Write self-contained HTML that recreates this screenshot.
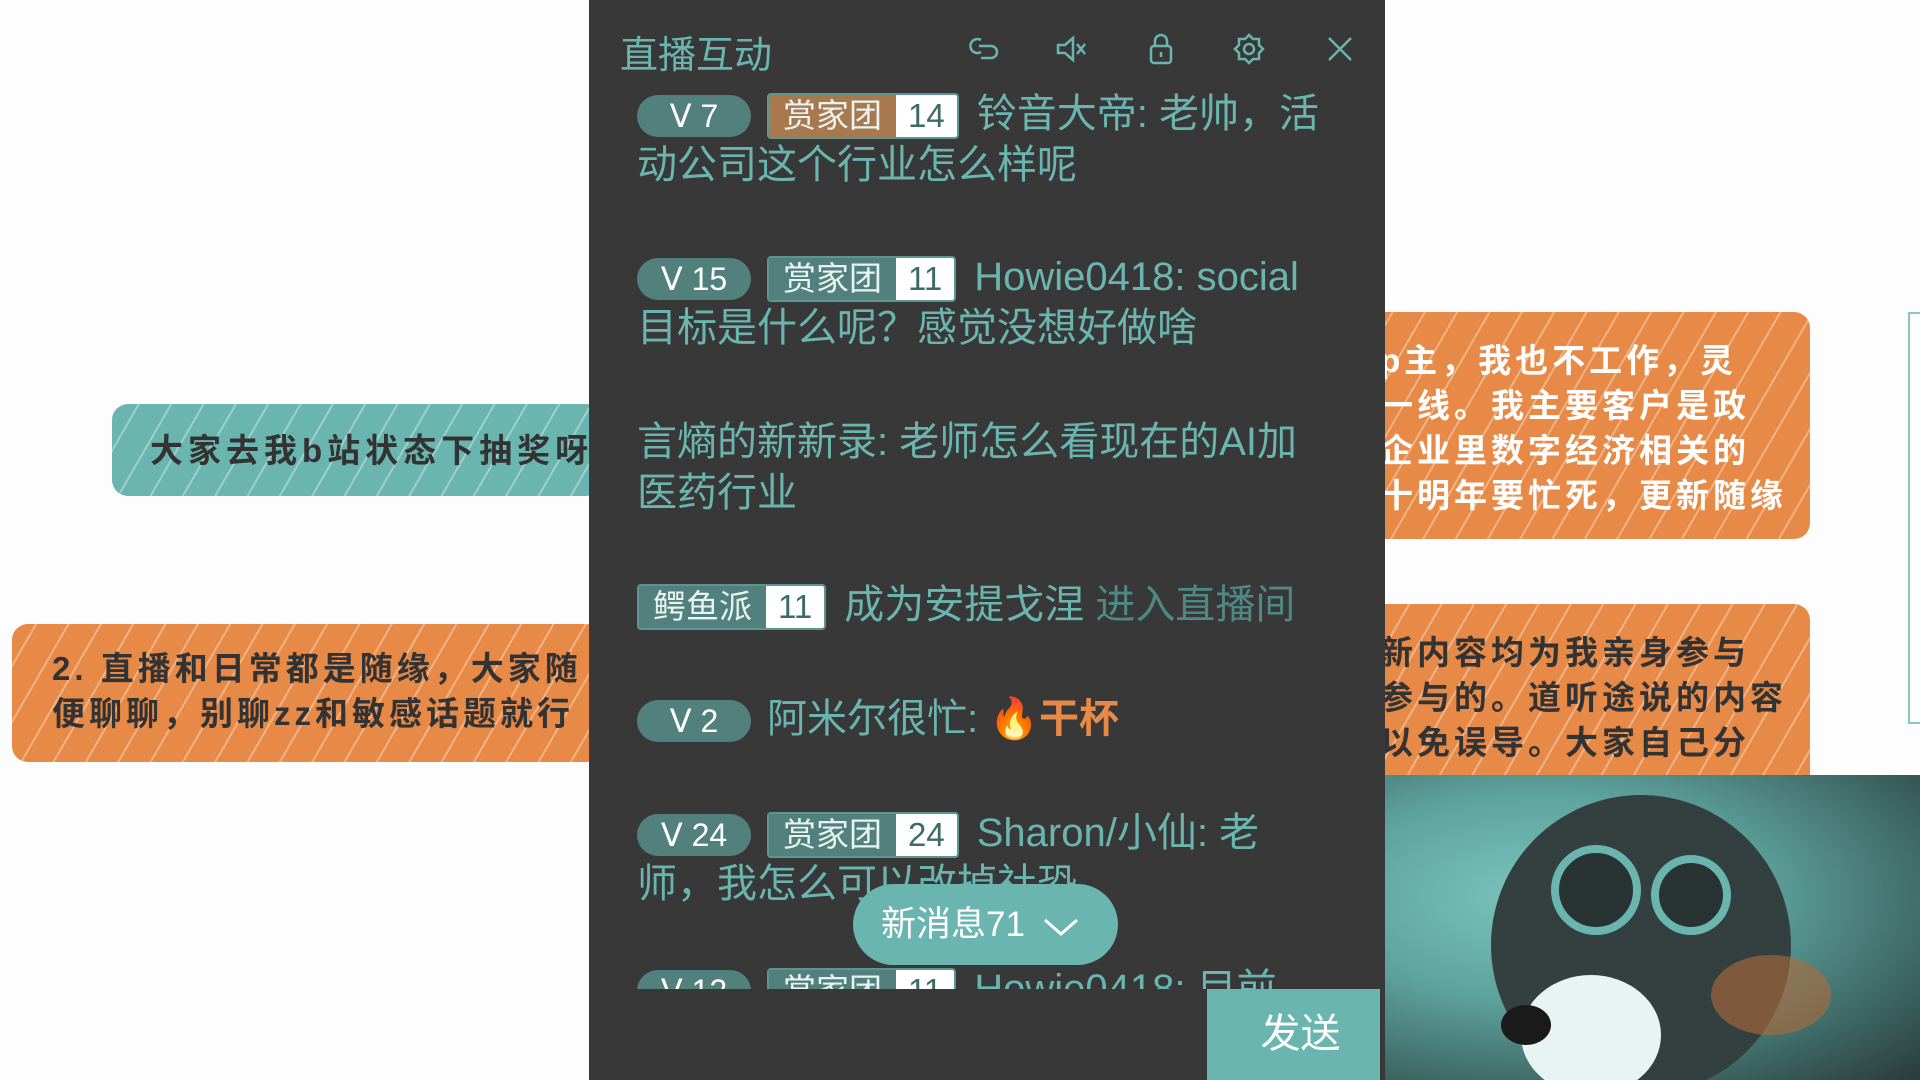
<!DOCTYPE html>
<html><head><meta charset="utf-8"><style>
*{margin:0;padding:0;box-sizing:border-box}
body{width:1920px;height:1080px;background:#fdfdfd;position:relative;overflow:hidden;font-family:"Liberation Sans","Noto Sans CJK SC",sans-serif}
.abs{position:absolute}
.bub{position:absolute;border-radius:16px;font-weight:bold;font-size:33px;letter-spacing:4px;line-height:45px;background-image:repeating-linear-gradient(-60deg,rgba(255,255,255,0) 0 26px,rgba(255,255,255,.35) 26px 28px)}
.panel{left:589px;top:0;width:796px;height:1080px;background:#383838}
.chat{position:absolute;left:48px;top:80px;width:740px;height:909px;overflow:hidden;color:#6ab5b0;font-size:40px;line-height:51px}
.msg{position:absolute;left:0;width:740px;white-space:nowrap}
.fan{display:inline-block;vertical-align:middle;height:42px;line-height:42px;width:114px;border-radius:21px;background:#52807d;color:#fff;font-size:32px;text-align:center;margin-right:16px}
.lab{display:inline-block;vertical-align:middle;height:46px;line-height:42px;border:2px solid #5d9591;border-radius:4px;overflow:hidden;margin-right:18px;font-size:33px}
.lab span{display:inline-block;padding:0 14px;background:#52807d;color:#e8f4f3}
.lab b{display:inline-block;font-weight:normal;background:#fff;color:#3d6b68;padding:0 12px}
.ic{position:absolute;top:32px;width:32px;height:34px}
</style></head><body>

<div class="bub" style="left:112px;top:404px;width:490px;height:92px;background-color:#6ab5b0;color:#333;padding:24px 0 0 38px;letter-spacing:5px">大家去我b站状态下抽奖呀</div>
<div class="bub" style="left:12px;top:624px;width:590px;height:138px;background-color:#e88a47;color:#333;padding:22px 0 0 40px">2. 直播和日常都是随缘，大家随<br>便聊聊，别聊zz和敏感话题就行</div>

<div class="bub" style="left:1340px;top:312px;width:470px;height:227px;background-color:#e88a47;color:#fff;padding:26px 0 0 40px;overflow:hidden;white-space:nowrap">p主，我也不工作，灵<br>一线。我主要客户是政<br>企业里数字经济相关的<br>十明年要忙死，更新随缘</div>
<div class="bub" style="left:1340px;top:604px;width:470px;height:200px;background-color:#e88a47;color:#333;padding:26px 0 0 40px;overflow:hidden;white-space:nowrap">新内容均为我亲身参与<br>参与的。道听途说的内容<br>以免误导。大家自己分</div>

<div class="abs" style="left:1908px;top:312px;width:12px;height:412px;border:2px solid #8cc6c1;border-right:none"></div>

<div class="abs" style="left:1381px;top:775px;width:539px;height:305px;background:radial-gradient(ellipse at 30% 40%,#7cc4be 0,#5ea29d 40%,#3d6663 75%,#2a3b3a 100%);overflow:hidden">
<div class="abs" style="left:110px;top:20px;width:300px;height:300px;border-radius:50%;background:#33403f"></div>
<div class="abs" style="left:170px;top:70px;width:90px;height:90px;border-radius:50%;border:8px solid #6ab5b0;background:#2a3333"></div>
<div class="abs" style="left:270px;top:80px;width:80px;height:80px;border-radius:50%;border:8px solid #6ab5b0;background:#2a3333"></div>
<div class="abs" style="left:140px;top:200px;width:140px;height:120px;border-radius:50%;background:#e8f4f3"></div>
<div class="abs" style="left:120px;top:230px;width:50px;height:40px;border-radius:50%;background:#1a1a1a"></div>
<div class="abs" style="left:330px;top:180px;width:120px;height:80px;border-radius:50%;background:#b06a3a;opacity:.6"></div>
</div>
<div class="abs" style="left:1363px;top:793px;width:20px;height:60px;background:#4a5a59;border-radius:8px 0 0 8px"></div>

<div class="abs panel">
<div class="abs" style="left:31px;top:24px;color:#6ab5b0;font-size:38px">直播互动</div>
<svg class="ic" style="left:378px" viewBox="0 0 32 34" fill="none" stroke="#6ab5b0" stroke-width="2.5"><path d="M14 8a7 7 0 1 0 0 12M12 14h12a6 6 0 0 1 0 12H14"/></svg>
<svg class="ic" style="left:466px" viewBox="0 0 32 34" fill="none" stroke="#6ab5b0" stroke-width="2.5"><path d="M3 13h7l8-7v22l-8-7H3z"/><path d="M22 12l8 10M30 12l-8 10"/></svg>
<svg class="ic" style="left:556px" viewBox="0 0 32 34" fill="none" stroke="#6ab5b0" stroke-width="2.5"><rect x="6" y="14" width="20" height="17" rx="3"/><path d="M10 14V9a6 6 0 0 1 12 0v5M16 20v5"/></svg>
<svg class="ic" style="left:644px" viewBox="0 0 32 34" fill="none" stroke="#6ab5b0" stroke-width="2.5"><circle cx="16" cy="17" r="5"/><path d="M16 3l4 4h6v6l4 4-4 4v6h-6l-4 4-4-4H6v-6l-4-4 4-4V7h6z"/></svg>
<svg class="ic" style="left:735px" viewBox="0 0 32 34" fill="none" stroke="#6ab5b0" stroke-width="2.5"><path d="M5 6l22 22M27 6L5 28"/></svg>

<div class="chat">
<div class="msg" style="top:9px"><span class="fan">ᐯ 7</span><span class="lab"><span style="background:#a8794e">赏家团</span><b>14</b></span>铃音大帝: 老帅，活<br>动公司这个行业怎么样呢</div>
<div class="msg" style="top:172px"><span class="fan">ᐯ 15</span><span class="lab"><span>赏家团</span><b>11</b></span>Howie0418: social<br>目标是什么呢？感觉没想好做啥</div>
<div class="msg" style="top:337px">言熵的新新录: 老师怎么看现在的AI加<br>医药行业</div>
<div class="msg" style="top:500px"><span class="lab" style="margin-right:18px"><span>鳄鱼派</span><b>11</b></span>成为安提戈涅 <span style="color:#4f8985">进入直播间</span></div>
<div class="msg" style="top:614px"><span class="fan">ᐯ 2</span>阿米尔很忙: <span style="color:#e88a47;font-weight:bold">🔥干杯</span></div>
<div class="msg" style="top:728px"><span class="fan">ᐯ 24</span><span class="lab"><span>赏家团</span><b>24</b></span>Sharon/小仙: 老<br>师，我怎么可以改掉社恐</div>
<div class="msg" style="top:884px"><span class="fan">ᐯ 12</span><span class="lab"><span>赏家团</span><b>11</b></span>Howie0418: 目前</div>
</div>

<div class="abs" style="left:264px;top:884px;width:265px;height:81px;border-radius:41px;background:#6ab5b0;color:#fff;font-size:35px;line-height:81px;padding-left:28px">新消息71 <svg width="40" height="22" viewBox="0 0 40 22" style="vertical-align:middle;margin-left:6px" fill="none" stroke="#fff" stroke-width="3"><path d="M4 4l16 14 16-14"/></svg></div>
<div class="abs" style="left:618px;top:989px;width:173px;height:91px;background:#6ab5b0;color:#fff;font-size:40px;line-height:91px;text-align:center;padding-left:14px">发送</div>
</div>
</body></html>
